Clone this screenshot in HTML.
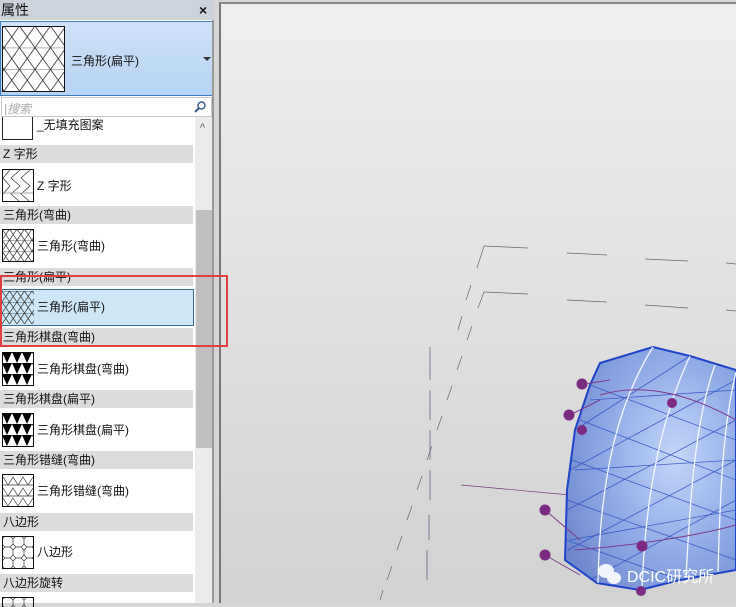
<!DOCTYPE html>
<html><head><meta charset="utf-8">
<style>
*{margin:0;padding:0;box-sizing:border-box}
body{width:736px;height:603px;overflow:hidden;position:relative;background:#d6d6d6;font-family:"Liberation Sans","Noto Sans CJK SC",sans-serif;font-size:12px;color:#111}
.a{position:absolute}
.hdr{position:absolute;left:0;width:193px;height:18px;background:#dcdcdc;line-height:18px;padding-left:3px;font-size:12px}
.th{position:absolute;left:2px;width:31px;height:33px;border:1px solid #222;background:#fff}
.lb{position:absolute;left:37px;font-size:12px;line-height:16px}
</style></head><body>
<svg width="0" height="0" style="position:absolute">
<defs>
<pattern id="tri" width="15" height="11" patternUnits="userSpaceOnUse">
<path d="M0 0H15M0 0L7.5 11L15 0M0 11L7.5 0M7.5 0L15 11" stroke="#333" stroke-width="0.7" fill="none"/>
</pattern>
<pattern id="tri2" width="31" height="21.7" patternUnits="userSpaceOnUse" x="2" y="0">
<path d="M0 0H31M0 0L15.5 21.7L31 0M0 21.7L15.5 0M15.5 0L31 21.7" stroke="#333" stroke-width="0.8" fill="none"/>
</pattern>
<pattern id="chk" width="10" height="11" patternUnits="userSpaceOnUse">
<path d="M0 0L5 11L10 0Z" fill="#000"/>
</pattern>
<pattern id="oct" width="11" height="11" patternUnits="userSpaceOnUse">
<path d="M3 0L8 0L11 3L11 8L8 11L3 11L0 8L0 3Z" stroke="#333" stroke-width="0.7" fill="none"/>
</pattern>
<linearGradient id="vg" x1="0" y1="0" x2="0" y2="1"><stop offset="0" stop-color="#efefef"/><stop offset="1" stop-color="#d2d2d2"/></linearGradient>
<radialGradient id="bg2" cx="0.65" cy="0.45" r="0.75"><stop offset="0" stop-color="#c4d6f8"/><stop offset="0.55" stop-color="#8fabe6"/><stop offset="1" stop-color="#6d86cc"/></radialGradient>
</defs></svg>

<!-- left panel -->
<div class="a" style="left:0;top:0;width:214px;height:603px;background:#fff"></div>
<div class="a" style="left:0;top:0;width:214px;height:20px;background:#ccd3dc;font-size:14px;line-height:20px;padding-left:1px">属性<span class="a" style="left:199px;top:0;font-size:14px;font-weight:bold">×</span></div>
<div class="a" style="left:0;top:21px;width:214px;height:75px;background:linear-gradient(#cfe2f8,#b5d3f3);border:1px solid #3e7cc0"></div>
<svg class="a" style="left:2px;top:26px" width="63" height="66"><rect x="0.5" y="0.5" width="62" height="65" fill="#fff"/><rect x="0" y="0" width="63" height="66" fill="url(#tri2)"/><rect x="0.5" y="0.5" width="62" height="65" fill="none" stroke="#111"/></svg>
<div class="a" style="left:71px;top:52px;font-size:12px">三角形(扁平)</div>
<div class="a" style="left:203px;top:57px;border-left:4px solid transparent;border-right:4px solid transparent;border-top:4px solid #333"></div>
<div class="a" style="left:1px;top:97px;width:211px;height:20px;background:#fff;border:1px solid #c8c8c8"></div>
<div class="a" style="left:4px;top:100px;color:#aaa;font-style:italic;font-size:12px">|搜索</div>
<svg class="a" style="left:193px;top:100px" width="14" height="14"><circle cx="8.5" cy="5.5" r="3.5" fill="none" stroke="#3a5b8c" stroke-width="1.5"/><path d="M6 8L2 12" stroke="#3a5b8c" stroke-width="2"/></svg>

<!-- scrollbar -->
<div class="a" style="left:195px;top:117px;width:17px;height:486px;background:#ececec"></div>
<div class="a" style="left:196px;top:210px;width:16px;height:238px;background:#c0c0c0"></div>
<div class="a" style="left:200px;top:122px;font-size:11px;color:#555">^</div>
<div class="a" style="left:212px;top:20px;width:2px;height:583px;background:#999"></div>

<!-- list -->
<div class="th" style="top:117px;height:23px;border-top:none"></div>
<div class="lb" style="top:117px">_无填充图案</div>

<div class="hdr" style="top:145px">Z 字形</div>
<svg class="a" style="left:2px;top:169px" width="32" height="33"><rect x="0.5" y="0.5" width="31" height="32" fill="#fff" stroke="#111"/><path d="M8 1L1 9L8 17L1 25M18 1L9 9L18 17L9 25L17 32M28 1L19 9L28 17L19 25L27 32" stroke="#333" stroke-width="0.7" fill="none"/><path d="M1 24H31" stroke="#aaa"/></svg>
<div class="lb" style="top:178px">Z 字形</div>

<div class="hdr" style="top:206px">三角形(弯曲)</div>
<svg class="a" style="left:2px;top:229px" width="32" height="33"><rect width="32" height="33" fill="url(#tri)"/><rect x="0.5" y="0.5" width="31" height="32" fill="none" stroke="#111"/></svg>
<div class="lb" style="top:238px">三角形(弯曲)</div>

<div class="hdr" style="top:268px">三角形(扁平)</div>
<div class="a" style="left:0;top:289px;width:194px;height:37px;background:#cde7f7;border:1px solid #3b6f93"></div>
<svg class="a" style="left:2px;top:291px" width="32" height="33"><rect width="32" height="33" fill="url(#tri)"/></svg>
<div class="lb" style="top:299px">三角形(扁平)</div>

<div class="hdr" style="top:328px">三角形棋盘(弯曲)</div>
<svg class="a" style="left:2px;top:352px" width="32" height="34"><rect width="32" height="34" fill="#fff"/><rect width="32" height="34" fill="url(#chk)"/><rect x="0.5" y="0.5" width="31" height="33" fill="none" stroke="#111"/></svg>
<div class="lb" style="top:361px">三角形棋盘(弯曲)</div>

<div class="hdr" style="top:390px">三角形棋盘(扁平)</div>
<svg class="a" style="left:2px;top:413px" width="32" height="34"><rect width="32" height="34" fill="#fff"/><rect width="32" height="34" fill="url(#chk)"/><rect x="0.5" y="0.5" width="31" height="33" fill="none" stroke="#111"/></svg>
<div class="lb" style="top:422px">三角形棋盘(扁平)</div>

<div class="hdr" style="top:451px">三角形错缝(弯曲)</div>
<svg class="a" style="left:2px;top:474px" width="32" height="33"><rect x="0.5" y="0.5" width="31" height="32" fill="#fff" stroke="#111"/><path d="M1 3L6 11L11 3L16 11L21 3L26 11L31 3M1 11H31M1 22H31M1 14L6 22L11 14L16 22L21 14L26 22L31 14M1 24L6 32L11 24L16 32L21 24L26 32L31 24" stroke="#333" stroke-width="0.7" fill="none"/></svg>
<div class="lb" style="top:483px">三角形错缝(弯曲)</div>

<div class="hdr" style="top:513px">八边形</div>
<svg class="a" style="left:2px;top:536px" width="32" height="33"><rect width="32" height="33" fill="#fff"/><rect width="32" height="33" fill="url(#oct)"/><rect x="0.5" y="0.5" width="31" height="32" fill="none" stroke="#111"/></svg>
<div class="lb" style="top:544px">八边形</div>

<div class="hdr" style="top:574px">八边形旋转</div>
<svg class="a" style="left:2px;top:597px" width="32" height="10"><rect width="32" height="10" fill="url(#oct)"/><rect x="0.5" y="0.5" width="31" height="12" fill="none" stroke="#111"/></svg>

<!-- viewport -->
<div class="a" style="left:219px;top:2px;width:517px;height:601px;border-left:2px solid #777;border-top:2px solid #888"></div>
<svg class="a" style="left:221px;top:4px" width="515" height="599">
<rect width="515" height="599" fill="url(#vg)"/>
<g transform="translate(-221,-4)" fill="none" stroke="#666" stroke-width="0.7">
<path d="M484 246L528 248M567 253L607 255M645 259L688 261M726 263L736 264" />
<path d="M484 246L477 268M471 285L466 300M462 316L458 330" />
<path d="M484 292L528 294M567 300L607 302M645 305L688 308M726 310L736 311" />
<path d="M484 292L478 308M472 326L467 340M462 356L457 370M452 386L447 400M442 416L437 430M432 446L427 460M422 476L417 490M412 506L407 520M402 536L397 550M392 566L387 580M383 590L380 600" />
<path d="M430 347V380M430 390V420M430 430V460M430 470V500M429 515V540M427 550V580" stroke="#6a4a7a"/>
<path d="M461 485L570 495" stroke="#7a3a7a"/>
</g>
<g transform="translate(-221,-4)">
<path d="M600 363L653 347L690 356L736 370L736 570L680 580L640 590L597 583L565 560L567 490L575 430L590 385Z" fill="url(#bg2)" stroke="#1f44c8" stroke-width="2"/>
<g stroke="#2a4cc0" stroke-width="0.8" fill="none" opacity="0.85">
<path d="M590 385L736 440M580 420L736 480M572 460L736 520M567 500L736 560M566 540L680 580"/>
<path d="M575 430L690 356M570 470L736 380M567 510L736 420M568 550L736 460M590 580L736 500"/>
<path d="M590 400L736 390M575 470L736 460M570 540L736 510"/>
</g>
<g stroke="#f2f6ff" stroke-width="1.3" fill="none">
<path d="M653 347C620 400 600 470 598 583"/>
<path d="M690 356C660 420 645 500 642 590"/>
<path d="M715 365C695 420 690 500 686 578"/>
<path d="M736 372C722 430 720 500 718 572"/>
</g>
<path d="M585 384L610 380M570 415L600 400M545 510L580 540M545 555L580 575M600 395C650 380 700 400 736 420M575 550C640 545 700 535 736 525" stroke="#7a3a8a" fill="none"/>
<g fill="#7d2a82"><circle cx="582" cy="384" r="5.5"/><circle cx="569" cy="415" r="5.5"/><circle cx="582" cy="430" r="5"/><circle cx="672" cy="403" r="5"/><circle cx="545" cy="510" r="5.5"/><circle cx="545" cy="555" r="5.5"/><circle cx="642" cy="546" r="5.5"/><circle cx="641" cy="591" r="5"/></g>
<g fill="#fff" opacity="0.9"><ellipse cx="606" cy="571" rx="8" ry="7"/><ellipse cx="614" cy="578" rx="7" ry="6"/></g>
<text x="627" y="582" fill="#fff" font-family="Liberation Sans,Noto Sans CJK SC,sans-serif" font-size="16">DCIC研究所</text>
</g>
</svg>

<!-- red box -->
<div class="a" style="left:0;top:275px;width:228px;height:72px;border:2px solid #e04040"></div>
</body></html>
